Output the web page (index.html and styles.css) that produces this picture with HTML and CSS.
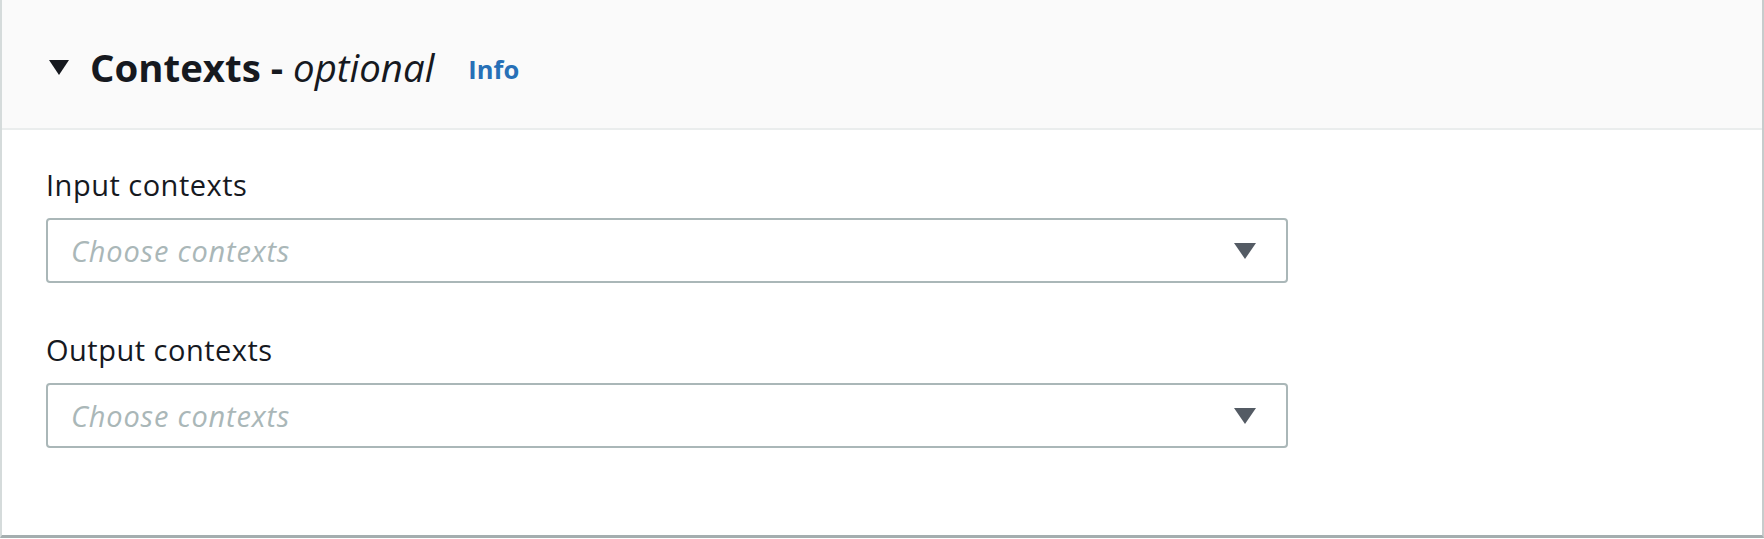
FILE: index.html
```html
<!DOCTYPE html>
<html lang="en">
<head>
<meta charset="utf-8">
<title>Contexts</title>
<link rel="stylesheet" href="styles.css">
</head>
<body>
<section class="card">
  <header class="card-header">
    <span class="caret" aria-hidden="true"></span>
    <h2 class="title">Contexts - <em>optional</em></h2>
    <a class="info" href="#">Info</a>
  </header>
  <div class="card-body">
    <div class="field">
      <label class="label">Input contexts</label>
      <div class="select">
        <span class="placeholder">Choose contexts</span>
        <span class="arrow" aria-hidden="true"></span>
      </div>
    </div>
    <div class="field">
      <label class="label">Output contexts</label>
      <div class="select">
        <span class="placeholder">Choose contexts</span>
        <span class="arrow" aria-hidden="true"></span>
      </div>
    </div>
  </div>
</section>
</body>
</html>
```
FILE: styles.css
```css
* { box-sizing: border-box; }
html, body { margin: 0; padding: 0; background: #ffffff; }
body {
  font-family: "Open Sans", "Noto Sans", "Liberation Sans", sans-serif;
  color: #16191f;
  width: 1764px;
  height: 539px;
  overflow: hidden;
}
.card {
  height: 538px;
  background: #ffffff;
  border-left: 2px solid #d5dbdb;
  border-right: 2px solid #c6cccc;
  border-bottom: 3px solid #a4aeaf;
  display: flex;
  flex-direction: column;
}
.card-header {
  height: 130px;
  background: #fafafa;
  border-bottom: 2px solid #eaeded;
  display: flex;
  align-items: center;
  padding-left: 47px;
  padding-top: 6px;
}
.caret {
  width: 0;
  height: 0;
  border-left: 10px solid transparent;
  border-right: 10px solid transparent;
  border-top: 15px solid #16191f;
  margin-right: 21px;
}
.title {
  margin: 0;
  font-size: 38.4px;
  font-weight: 700;
  line-height: 48px;
  color: #16191f;
}
.title em {
  font-weight: 400;
  font-style: italic;
}
.info {
  margin-left: 34px;
  margin-top: 4px;
  font-size: 25.5px;
  font-weight: 700;
  color: #2770b7;
  text-decoration: none;
}
.card-body {
  padding: 35px 0 0 44px;
  display: flex;
  flex-direction: column;
  gap: 47px;
}
.field {
  display: flex;
  flex-direction: column;
  gap: 13px;
}
.label {
  font-size: 29px;
  line-height: 40px;
  letter-spacing: 0.5px;
  color: #16191f;
}
.select {
  width: 1242px;
  height: 65px;
  border: 2px solid #aab7b8;
  border-radius: 4px;
  display: flex;
  align-items: center;
  justify-content: space-between;
  padding: 0 30px 0 23px;
}
.placeholder {
  font-size: 29px;
  font-style: italic;
  letter-spacing: 0.8px;
  color: #aab7b8;
}
.arrow {
  width: 0;
  height: 0;
  border-left: 11px solid transparent;
  border-right: 11px solid transparent;
  border-top: 16px solid #545b64;
}
```
